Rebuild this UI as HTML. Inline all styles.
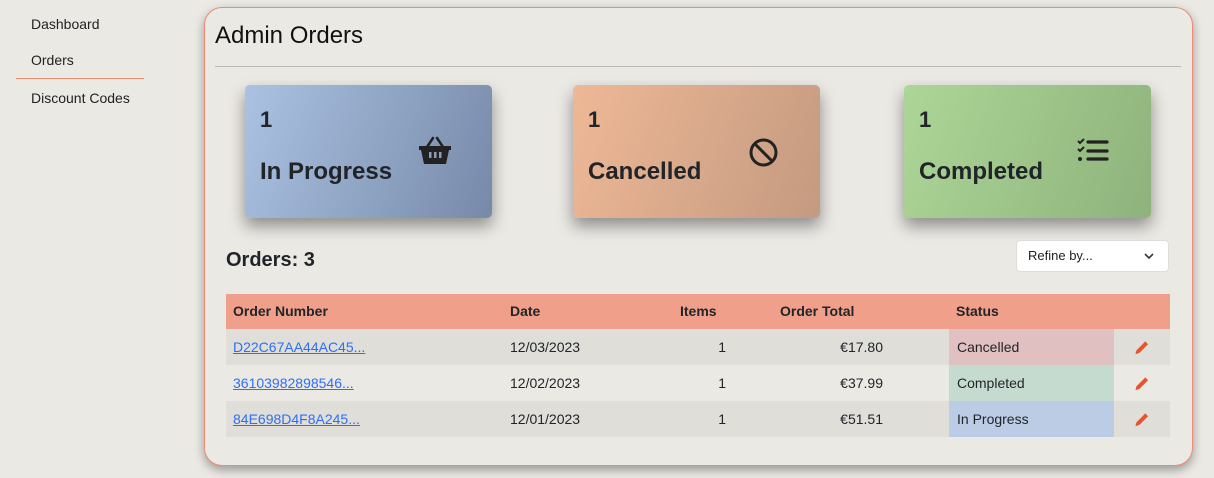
<!DOCTYPE html>
<html><head><style>
*{box-sizing:border-box;margin:0;padding:0}
body{width:1214px;height:478px;background:#ebe9e4;font-family:"Liberation Sans",sans-serif;color:#212529;position:relative;overflow:hidden}
.nav{position:absolute;left:31px;font-size:14px;color:#222}
.navline{position:absolute;left:16px;top:78px;width:128px;height:1px;background:#f08a6e}
.card{position:absolute;left:204px;top:7px;width:989px;height:459px;border:1.5px solid #ef8b72;border-radius:18px;background:#ebe9e4;box-shadow:0 4px 10px rgba(0,0,0,.35)}
h1{position:absolute;left:215px;top:22px;font-size:24px;font-weight:normal;color:#111}
.hr{position:absolute;left:215px;top:66px;width:966px;height:1px;background:#bbb}
.stat{position:absolute;top:85px;width:247px;height:133px;border-radius:5px;box-shadow:0 8px 16px rgba(0,0,0,.4)}
.stat .n{position:absolute;left:15px;top:22px;font-size:22px;font-weight:bold}
.stat .l{position:absolute;left:15px;top:73px;font-size:24px;font-weight:bold}
.stat svg{position:absolute}
.ord{position:absolute;left:226px;top:249px;font-size:20px;font-weight:bold}
.sel{position:absolute;left:1016px;top:240px;width:153px;height:32px;background:#fff;border:1px solid #ddd;border-radius:4px;font-size:13px;padding:7px 11px;color:#222}
.row{position:absolute;left:226px;width:944px;font-size:14px}
.row div{position:absolute;top:0;line-height:36px;white-space:nowrap}
.h{top:294px;height:35px;background:#f0a08a;font-weight:bold}
.h div{line-height:35px}
.a{background:#dfded9}.b{background:#ebe9e4}
a{color:#2f6ff5;text-decoration:underline}
.st{left:723px;width:165px;height:36px;padding-left:8px}
.row .pen{left:908px;top:11px;line-height:0}
</style></head><body>
<div class="nav" style="top:16px">Dashboard</div>
<div class="nav" style="top:52px">Orders</div>
<div class="navline"></div>
<div class="nav" style="top:90px">Discount Codes</div>
<div class="card"></div>
<h1>Admin Orders</h1>
<div class="hr"></div>

<div class="stat" style="left:245px;background:linear-gradient(110deg,#abc2e2,#7789a8)">
<div class="n">1</div><div class="l">In Progress</div>
<svg style="left:173px;top:51px" width="34" height="30" viewBox="0 0 34 30"><path d="M9 11 L15 2 M25 11 L19 2" stroke="#222" stroke-width="2.5" fill="none" stroke-linecap="round"/><path d="M1 10 H33 V14 H31 L28 28 H6 L3 14 H1Z" fill="#222"/><rect x="11" y="16" width="2.5" height="6" fill="#8b9cb8"/><rect x="16" y="16" width="2.5" height="6" fill="#8b9cb8"/><rect x="21" y="16" width="2.5" height="6" fill="#8b9cb8"/></svg>
</div>
<div class="stat" style="left:573px;background:linear-gradient(110deg,#eeb896,#c49a80)">
<div class="n">1</div><div class="l">Cancelled</div>
<svg style="left:175px;top:52px" width="31" height="31" viewBox="0 0 31 31"><circle cx="15.5" cy="15.5" r="12.5" stroke="#222" stroke-width="3" fill="none"/><path d="M7 7 L24 24" stroke="#222" stroke-width="3"/></svg>
</div>
<div class="stat" style="left:904px;background:linear-gradient(110deg,#acd697,#8fb27c)">
<div class="n">1</div><div class="l">Completed</div>
<svg style="left:173px;top:53px" width="32" height="26" viewBox="0 0 32 26"><path d="M1 3 L3 5 L7 1 M1 11 L3 13 L7 9" stroke="#222" stroke-width="2" fill="none"/><circle cx="3" cy="21" r="2" fill="#222"/><path d="M11 4 H30 M11 13 H30 M11 21 H30" stroke="#222" stroke-width="3.2" stroke-linecap="round"/></svg>
</div>

<div class="ord">Orders: 3</div>
<div class="sel">Refine by...<svg style="position:absolute;right:14px;top:12px" width="10" height="7" viewBox="0 0 10 7"><path d="M1 1 L5 5 L9 1" stroke="#333" stroke-width="1.6" fill="none"/></svg></div>

<div class="row h"><div style="left:7px">Order Number</div><div style="left:284px">Date</div><div style="left:454px">Items</div><div style="left:554px">Order Total</div><div style="left:730px">Status</div></div>

<div class="row a" style="top:329px;height:36px"><div style="left:7px"><a>D22C67AA44AC45...</a></div><div style="left:284px">12/03/2023</div><div style="right:444px">1</div><div style="right:287px">€17.80</div><div class="st" style="background:#e0c0c0">Cancelled</div><div class="pen"><svg width="16" height="15" viewBox="0 0 16 16"><path d="M11.5 1.5 L14.5 4.5 L5 14 L1 15 L2 11Z" fill="#e8532f"/></svg></div></div>
<div class="row b" style="top:365px;height:36px"><div style="left:7px"><a>36103982898546...</a></div><div style="left:284px">12/02/2023</div><div style="right:444px">1</div><div style="right:287px">€37.99</div><div class="st" style="background:#c6dbd0">Completed</div><div class="pen"><svg width="16" height="15" viewBox="0 0 16 16"><path d="M11.5 1.5 L14.5 4.5 L5 14 L1 15 L2 11Z" fill="#e8532f"/></svg></div></div>
<div class="row a" style="top:401px;height:36px"><div style="left:7px"><a>84E698D4F8A245...</a></div><div style="left:284px">12/01/2023</div><div style="right:444px">1</div><div style="right:287px">€51.51</div><div class="st" style="background:#bccce4">In Progress</div><div class="pen"><svg width="16" height="15" viewBox="0 0 16 16"><path d="M11.5 1.5 L14.5 4.5 L5 14 L1 15 L2 11Z" fill="#e8532f"/></svg></div></div>
</body></html>
